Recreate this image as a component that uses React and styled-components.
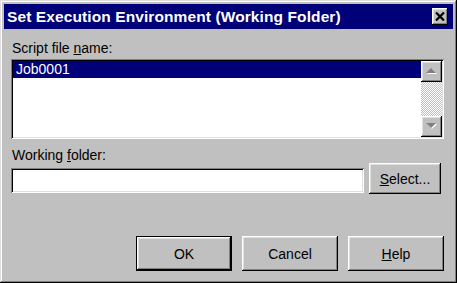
import React from 'react';
import styled, { createGlobalStyle } from 'styled-components';

const GlobalStyle = createGlobalStyle`
  html, body {
    margin: 0;
    padding: 0;
    background: #c0c0c0;
  }
  * {
    box-sizing: border-box;
  }
`;

const raised = `
  box-shadow: inset -1px -1px #000, inset 1px 1px #fff,
    inset -2px -2px #808080, inset 2px 2px #dfdfdf;
`;

const sunken = `
  box-shadow: inset 1px 1px #808080, inset -1px -1px #fff,
    inset 2px 2px #000, inset -2px -2px #dfdfdf;
`;

const Window = styled.div`
  width: 457px;
  height: 283px;
  display: flex;
  flex-direction: column;
  padding: 4px;
  background: #c0c0c0;
  box-shadow: inset -1px -1px #000, inset 1px 1px #dfdfdf,
    inset -2px -2px #808080, inset 2px 2px #fff;
  font-family: "Liberation Sans", Arial, sans-serif;
  font-size: 14px;
  color: #000;
`;

const TitleBar = styled.div`
  height: 25px;
  flex: none;
  display: flex;
  align-items: center;
  justify-content: space-between;
  padding: 0 5px 0 3px;
  background: #000078;
`;

const Title = styled.span`
  color: #fff;
  font-weight: bold;
  font-size: 15.5px;
  letter-spacing: 0.1px;
  line-height: 18px;
  padding-top: 1px;
  white-space: nowrap;
`;

const CloseButton = styled.div`
  width: 16px;
  height: 17px;
  display: flex;
  align-items: center;
  justify-content: center;
  background: #c0c0c0;
  ${raised}
`;

const Body = styled.div`
  flex: 1;
  display: flex;
  flex-direction: column;
  padding: 7px 9px 8px 7px;
`;

const Label = styled.div`
  line-height: 16px;
  padding-left: 1px;
  margin-top: ${props => props.$gap || 0}px;
`;

const ListBox = styled.div`
  margin-top: 3px;
  height: 80px;
  display: flex;
  padding: 2px;
  background: #fff;
  ${sunken}
`;

const Items = styled.div`
  flex: 1;
`;

const Item = styled.div`
  height: 17px;
  line-height: 17px;
  padding-left: 3px;
  background: ${props => props.$selected ? '#000078' : 'transparent'};
  color: ${props => props.$selected ? '#fff' : '#000'};
`;

const ScrollBar = styled.div`
  width: 21px;
  display: flex;
  flex-direction: column;
`;

const ScrollButton = styled.div`
  height: 21px;
  flex: none;
  display: flex;
  align-items: center;
  justify-content: center;
  background: #c0c0c0;
  ${raised}
`;

const Track = styled.div`
  flex: 1;
  background: repeating-conic-gradient(#fff 0 25%, #c0c0c0 0 50%) 0 0 / 2px 2px;
`;

const FieldRow = styled.div`
  display: flex;
  align-items: flex-start;
  gap: 5px;
`;

const TextField = styled.div`
  width: 353px;
  height: 25px;
  margin-top: 5px;
  background: #fff;
  ${sunken}
`;

const Button = styled.div`
  width: ${props => props.$width || 96}px;
  height: ${props => props.$height || 35}px;
  display: flex;
  align-items: center;
  justify-content: center;
  background: #c0c0c0;
  ${raised}
  ${props => props.$default && `
    box-shadow: inset 0 0 0 1px #000, inset -2px -2px #000, inset 2px 2px #fff,
      inset -3px -3px #808080, inset 3px 3px #dfdfdf;
  `}
`;

const ButtonRow = styled.div`
  margin-top: auto;
  display: flex;
  justify-content: flex-end;
  gap: 10px;
`;

function Arrow({ up }) {
  const pts = up ? '0,5 5,0 10,5' : '0,0 5,5 10,0';
  return (
    <svg width="12" height="7" viewBox="0 0 12 7">
      <polygon points={pts} fill="#fff" transform="translate(1 1)" />
      <polygon points={pts} fill="#808080" />
    </svg>
  );
}

function App() {
  return (
    <>
      <GlobalStyle />
      <Window>
        <TitleBar>
          <Title>Set Execution Environment (Working Folder)</Title>
          <CloseButton>
            <svg width="10" height="9" viewBox="0 0 10 9">
              <path d="M1 0.5 L9 8.5 M9 0.5 L1 8.5" stroke="#000" strokeWidth="2.2" />
            </svg>
          </CloseButton>
        </TitleBar>
        <Body>
          <Label $gap={4}>Script file <u>n</u>ame:</Label>
          <ListBox>
            <Items>
              <Item $selected>Job0001</Item>
            </Items>
            <ScrollBar>
              <ScrollButton><Arrow up /></ScrollButton>
              <Track />
              <ScrollButton><Arrow /></ScrollButton>
            </ScrollBar>
          </ListBox>
          <Label $gap={8}>Working <u>f</u>older:</Label>
          <FieldRow>
            <TextField />
            <Button $width={72} $height={31}><span><u>S</u>elect...</span></Button>
          </FieldRow>
          <ButtonRow>
            <Button $default>OK</Button>
            <Button>Cancel</Button>
            <Button><span><u>H</u>elp</span></Button>
          </ButtonRow>
        </Body>
      </Window>
    </>
  );
}

export default App;
